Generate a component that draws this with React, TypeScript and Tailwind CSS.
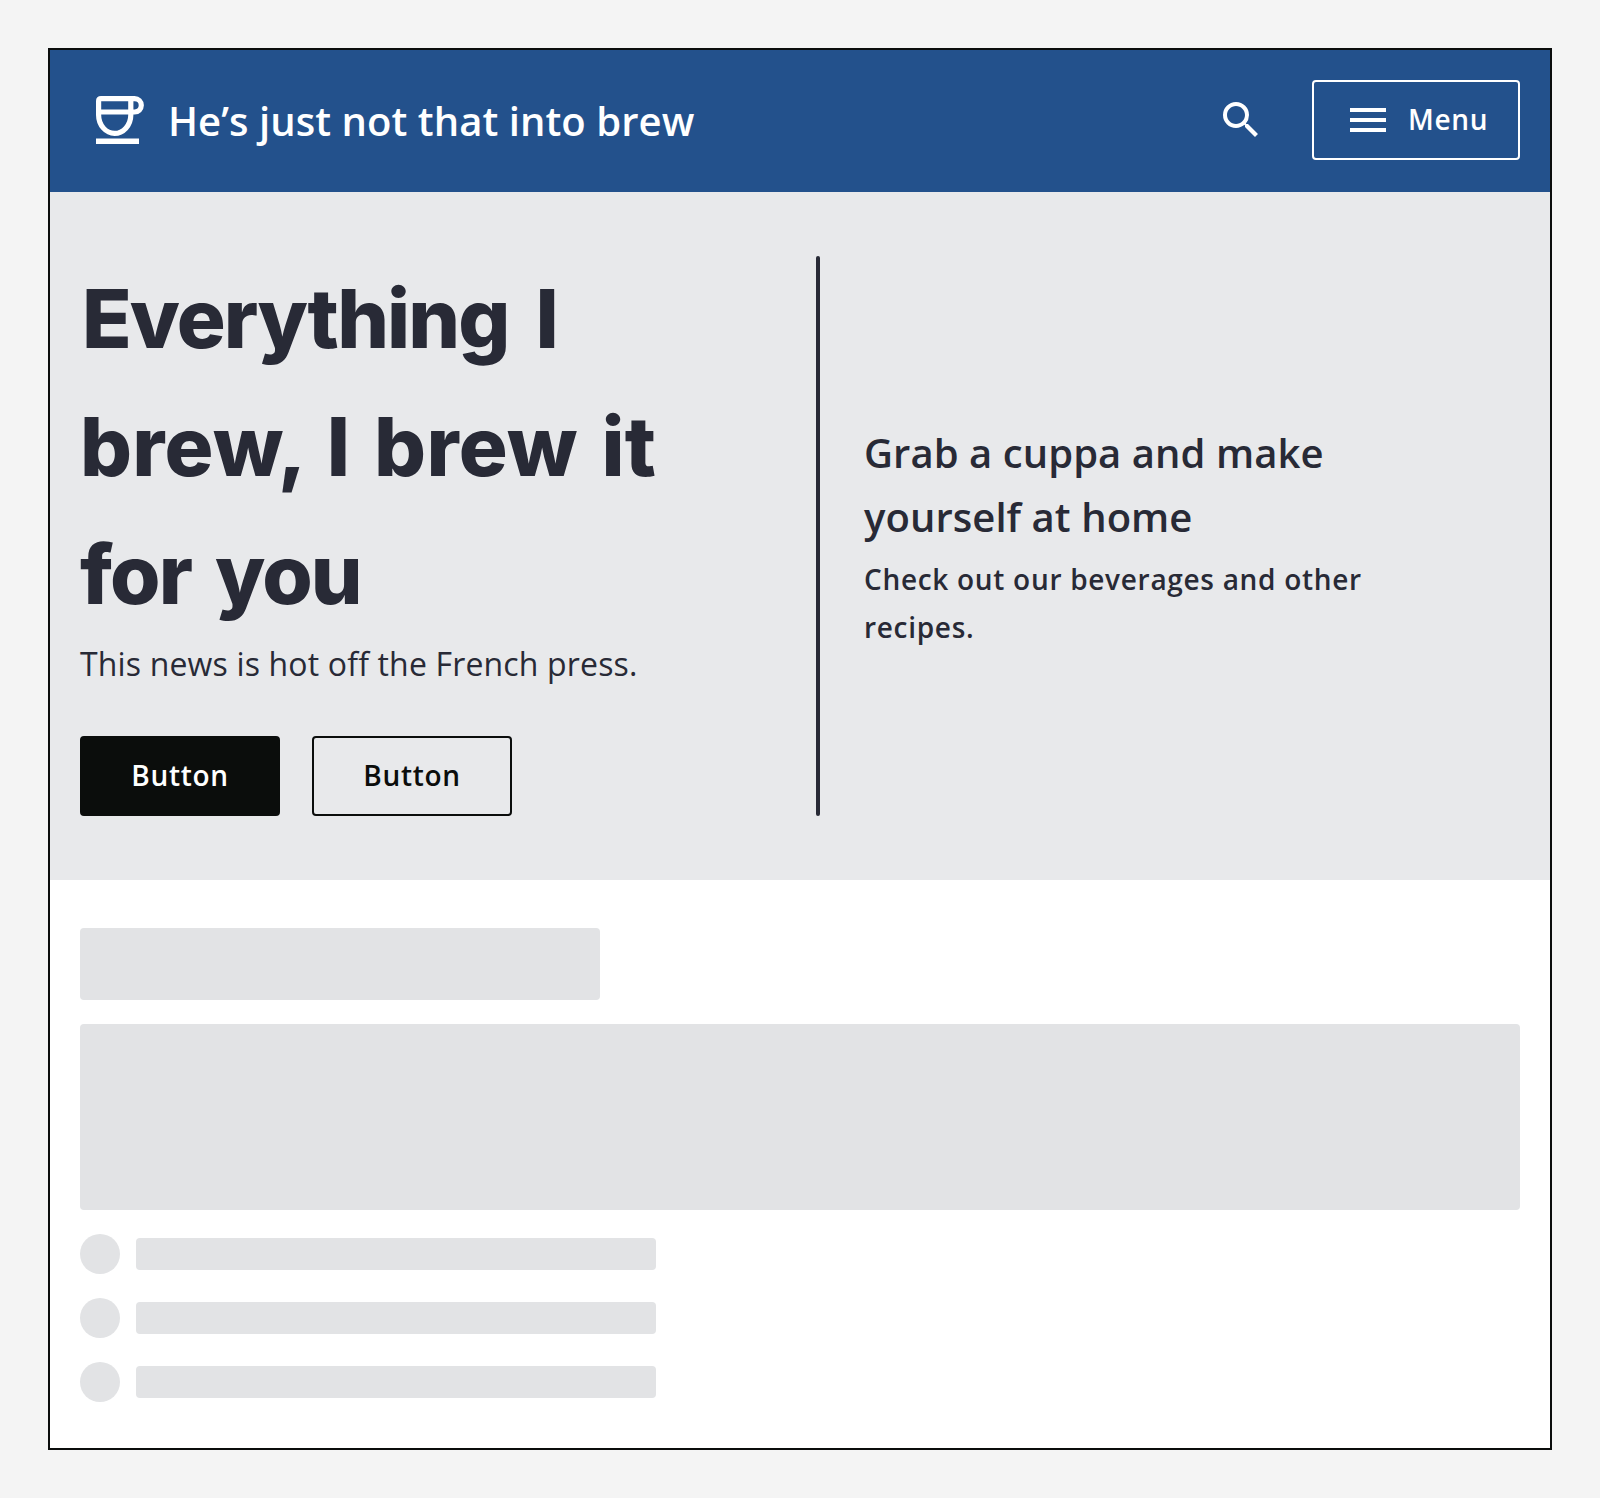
import React from "react";

function CupIcon() {
  return (
    <svg className="block h-12 w-12" viewBox="0 0 48 48" fill="none" stroke="#fff">
      <path
        d="M5 2.6H34.8V19C34.8 29.5 27 37.4 18.6 37.4S2.6 29.5 2.6 19V5Q2.6 2.6 5 2.6Z"
        strokeWidth="5.2"
      />
      <path d="M34.8 2.6H38.6A6.7 6.7 0 0 1 38.6 16H2.6" strokeWidth="5.2" />
      <path d="M0 45.3H43" strokeWidth="5.4" />
    </svg>
  );
}

function SearchIcon() {
  return (
    <svg className="block h-12 w-12" viewBox="0 0 24 24" fill="#fff">
      <path d="M15.5 14h-.79l-.28-.27A6.471 6.471 0 0 0 16 9.5 6.5 6.5 0 1 0 9.5 16c1.61 0 3.09-.59 4.23-1.57l.27.28v.79l5 4.99L20.49 19l-4.99-5zm-6 0C7.01 14 5 11.99 5 9.5S7.01 5 9.5 5 14 7.01 14 9.5 11.99 14 9.5 14z" />
    </svg>
  );
}

function MenuIcon() {
  return (
    <svg className="block h-12 w-12" viewBox="0 0 24 24" fill="#fff">
      <path d="M3 18h18v-2H3v2zm0-5h18v-2H3v2zm0-7v2h18V6H3z" />
    </svg>
  );
}

export default function App() {
  return (
    <div className="h-[1498px] w-[1600px] bg-[#f4f4f4] p-12 font-['Open_Sans',sans-serif] text-[#282a36]">
      <div className="h-[1402px] border-2 border-[#0b0d0c] bg-white">
        <header className="flex h-[142px] items-center justify-between bg-[#23518c] pr-[30px] pb-0.5 pl-[46px] text-white">
          <div className="flex items-center gap-6">
            <CupIcon />
            <span className="pt-px text-[40px] leading-[64px] font-semibold tracking-[0.06px] whitespace-nowrap">He’s just not that into brew</span>
          </div>
          <div className="flex items-center gap-[47.5px]">
            <button className="block">
              <SearchIcon />
            </button>
            <button className="flex h-20 w-[208px] items-center gap-4 rounded border-2 border-white pl-[30px]">
              <MenuIcon />
              <span className="pb-0.5 text-[28px] leading-[48px] font-semibold tracking-[0.7px]">Menu</span>
            </button>
          </div>
        </header>

        <section className="flex h-[688px] bg-[#e8e9eb] px-[30px] py-16">
          <div className="flex w-[736px] flex-col justify-between">
            <div>
              <h1 className="-mt-px font-['Inter',sans-serif] text-[81.6px] leading-[128px] font-extrabold whitespace-nowrap">
                <span className="block pl-0.5 tracking-[-1.9px] [word-spacing:11px]">Everything I</span>
                <span className="block tracking-[0.3px] [word-spacing:5.5px]">brew, I brew it</span>
                <span className="block tracking-[-1.9px] [word-spacing:8px]">for you</span>
              </h1>
              <p className="-mt-px text-[32px] leading-[51px] tracking-[0.16px]">This news is hot off the French press.</p>
            </div>
            <div className="flex gap-8">
              <button className="h-20 w-[200px] rounded border-2 border-[#0b0d0c] bg-[#0b0d0c] pb-0.5 text-[28px] leading-[48px] font-semibold tracking-[0.7px] text-white">
                Button
              </button>
              <button className="h-20 w-[200px] rounded border-2 border-[#0b0d0c] pb-0.5 text-[28px] leading-[48px] font-semibold tracking-[0.7px] text-[#0b0d0c]">
                Button
              </button>
            </div>
          </div>
          <div className="w-1 rounded-full bg-[#282a36]" />
          <div className="flex flex-col justify-center gap-1.5 pl-11 font-semibold whitespace-nowrap">
            <h2 className="text-[40px] leading-[64px] tracking-[0.06px]">
              Grab a cuppa and make
              <br />
              yourself at home
            </h2>
            <p className="text-[28px] leading-[48px] tracking-[0.7px]">
              Check out our beverages and other
              <br />
              recipes.
            </p>
          </div>
        </section>

        <main className="flex flex-col gap-6 px-[30px] pt-12">
          <div className="h-[72px] w-[520px] rounded bg-[#e2e3e5]" />
          <div className="h-[186px] rounded bg-[#e2e3e5]" />
          {[0, 1, 2].map((row) => (
            <div key={row} className="flex h-10 items-center gap-4">
              <div className="h-10 w-10 rounded-full bg-[#e2e3e5]" />
              <div className="h-8 w-[520px] rounded bg-[#e2e3e5]" />
            </div>
          ))}
        </main>
      </div>
    </div>
  );
}
